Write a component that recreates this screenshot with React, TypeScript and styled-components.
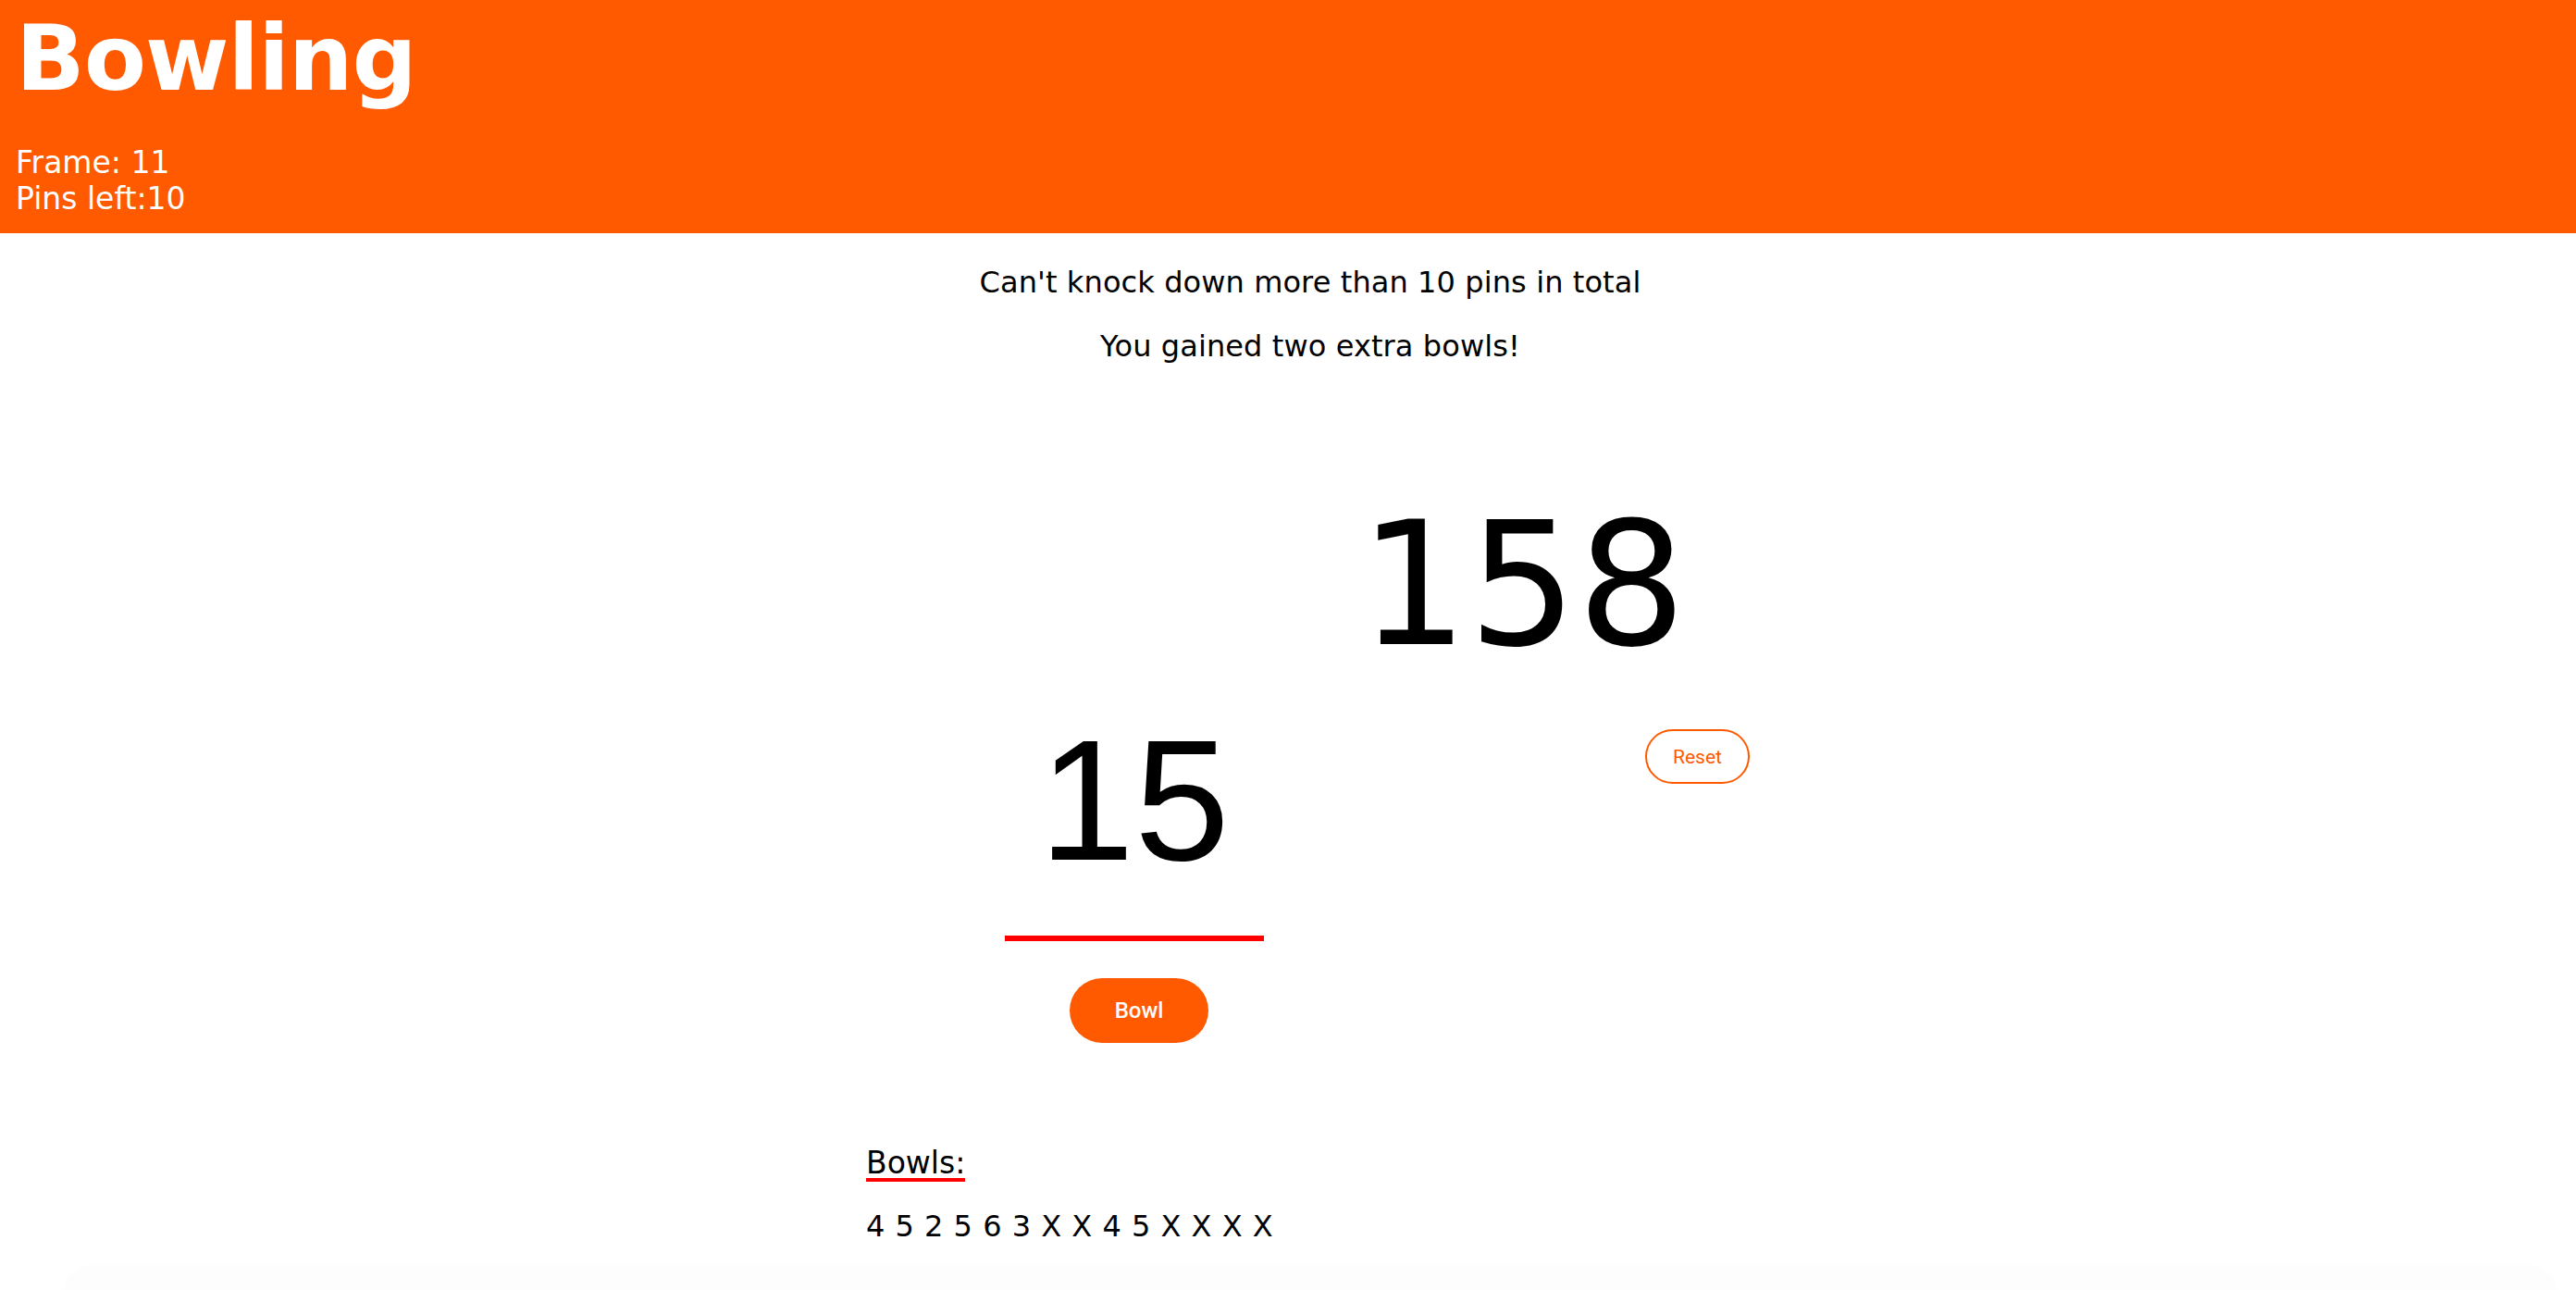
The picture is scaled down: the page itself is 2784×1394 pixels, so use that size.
import React from "react";
import styled, { createGlobalStyle } from "styled-components";

const GlobalStyle = createGlobalStyle`
  html, body {
    margin: 0;
    padding: 0;
    background: #ffffff;
    font-family: "DejaVu Sans", Verdana, sans-serif;
    color: #000000;
  }
  * { box-sizing: border-box; }
`;

const ORANGE = "#ff5a00";

const Header = styled.header`
  background: ${ORANGE};
  color: #ffffff;
  height: 252px;
  padding: 15px 14px 0 17px;
  display: flex;
  flex-direction: column;
`;

const Title = styled.h1`
  margin: 0;
  font-family: "DejaVu Sans", Verdana, sans-serif;
  font-weight: 700;
  font-size: 98px;
  line-height: 97px;
  letter-spacing: -1px;
`;

const Status = styled.div`
  margin-top: 44px;
  font-size: 33px;
  line-height: 39px;
`;

const Main = styled.main`
  padding-left: 48px;
  display: flex;
  flex-direction: column;
`;

const Messages = styled.div`
  margin-top: 34px;
  display: flex;
  flex-direction: column;
  align-items: center;
  gap: 31px;
`;

const Message = styled.p`
  margin: 0;
  font-size: 32px;
  line-height: 38px;
  letter-spacing: 0.1px;
  text-align: center;
`;

const GameArea = styled.section`
  margin-top: 141px;
  padding-left: 145px;
  display: grid;
  grid-template-columns: 280px 427px;
  grid-template-rows: auto auto;
  column-gap: 98px;
  row-gap: 41px;
  justify-content: center;
  align-items: start;
`;

const Score = styled.div`
  grid-column: 2;
  grid-row: 1;
  font-family: "DejaVu Sans", Verdana, sans-serif;
  font-size: 185px;
  line-height: 192px;
  padding-left: 5px;
  padding-top: 2px;
`;

const BowlColumn = styled.div`
  grid-column: 1;
  grid-row: 2;
  display: flex;
  flex-direction: column;
  align-items: center;
`;

const PinsInput = styled.div`
  width: 280px;
  font-family: "Liberation Sans", Arial, sans-serif;
  font-size: 185px;
  line-height: 192px;
  text-align: center;
  padding-bottom: 50px;
  border-bottom: 6px solid #ff0000;
`;

const PillButton = styled.button<{ $variant: "solid" | "outline" }>`
  font-family: Roboto, "Liberation Sans", Arial, sans-serif;
  border-radius: 40px;
  cursor: pointer;
  display: flex;
  align-items: center;
  justify-content: center;
  padding: 0;
  ${(p) =>
    p.$variant === "solid"
      ? `
    background: ${ORANGE};
    color: #ffffff;
    border: none;
    width: 150px;
    height: 70px;
    font-size: 24px;
    font-weight: 500;
    margin-top: 40px;
    margin-left: 10px;
  `
      : `
    background: #ffffff;
    color: ${ORANGE};
    border: 2px solid ${ORANGE};
    width: 113px;
    height: 59px;
    font-size: 21px;
    font-weight: 400;
  `}
`;

const ResetSlot = styled.div`
  grid-column: 2;
  grid-row: 2;
  justify-self: end;
  margin-top: 19px;
`;

const BowlsSection = styled.section`
  width: 964px;
  margin: 114px auto 0;
  display: flex;
  flex-direction: column;
  align-items: flex-start;
  padding-left: 2px;
`;

const BowlsHeading = styled.h2`
  margin: 0;
  font-size: 33px;
  font-weight: 400;
  line-height: 32px;
  border-bottom: 4px solid #ff0000;
`;

const BowlsList = styled.p`
  margin: 30px 0 0;
  font-size: 32px;
  line-height: 36px;
  word-spacing: 1px;
`;

const Footer = styled.footer`
  margin: 26px 20px 0;
  height: 40px;
  background: #fdfdfd;
  border-radius: 30px 30px 0 0;
  box-shadow: 0 -4px 14px rgba(0, 0, 0, 0.008);
`;

const bowls = ["4", "5", "2", "5", "6", "3", "X", "X", "4", "5", "X", "X", "X", "X"];

export default function App() {
  return (
    <>
      <GlobalStyle />
      <Header>
        <Title>Bowling</Title>
        <Status>
          <div>Frame: 11</div>
          <div>Pins left:10</div>
        </Status>
      </Header>
      <Main>
        <Messages>
          <Message>Can't knock down more than 10 pins in total</Message>
          <Message>You gained two extra bowls!</Message>
        </Messages>
        <GameArea>
          <Score>158</Score>
          <BowlColumn>
            <PinsInput>15</PinsInput>
            <PillButton $variant="solid">Bowl</PillButton>
          </BowlColumn>
          <ResetSlot>
            <PillButton $variant="outline">Reset</PillButton>
          </ResetSlot>
        </GameArea>
        <BowlsSection>
          <BowlsHeading>Bowls:</BowlsHeading>
          <BowlsList>{bowls.join(" ")}</BowlsList>
        </BowlsSection>
        <Footer />
      </Main>
    </>
  );
}
